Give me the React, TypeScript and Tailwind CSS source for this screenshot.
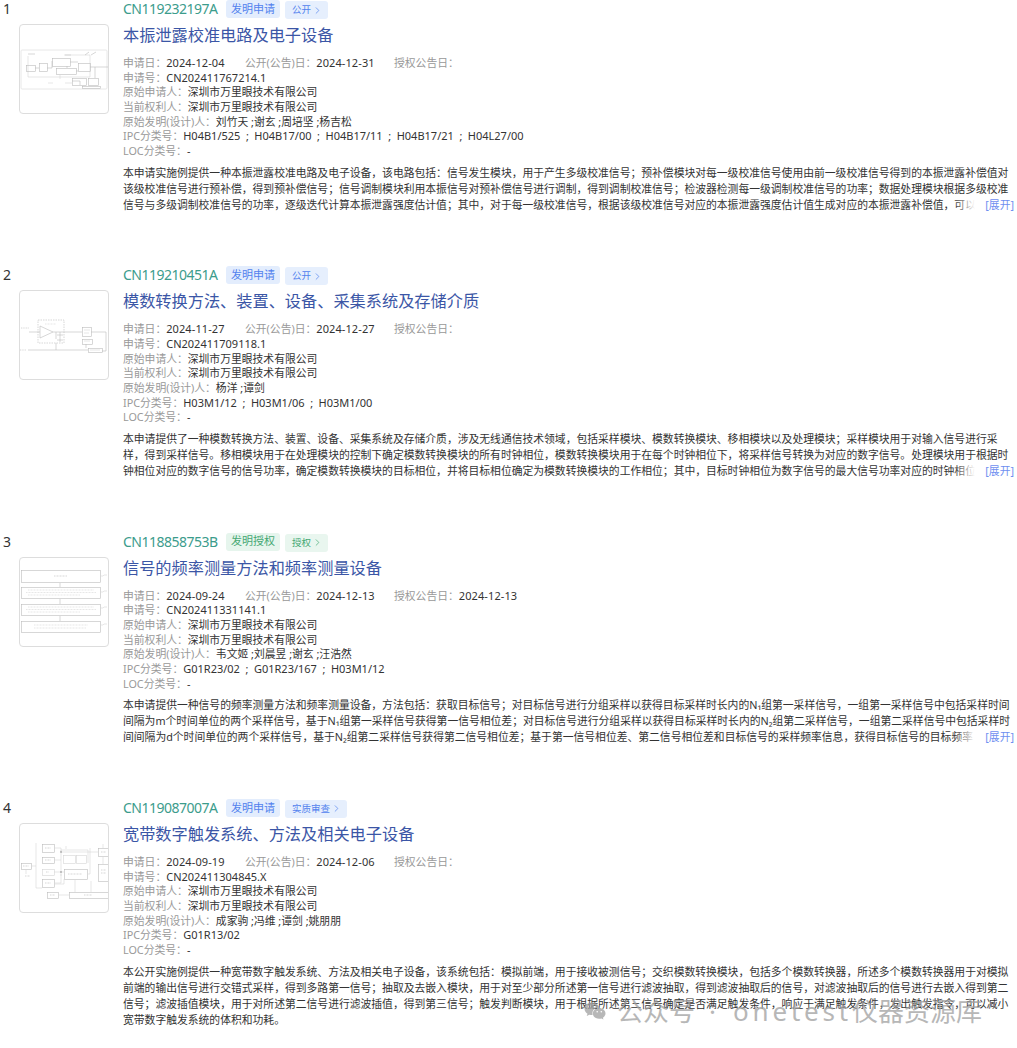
import React from "react";
import { FaWeixin } from "react-icons/fa";
import { ChevronRight } from "lucide-react";

type Row = {
  n: number;
  id: string;
  tag: string;
  status: string;
  green?: boolean;
  title: string;
  apply: string;
  pub: string;
  grant: string;
  appNo: string;
  inventors: string;
  ipc: string[];
  lines: string[];
  clipped: boolean;
  thumb: React.ReactNode;
};

const L = "#d6d6d6";
const D = "#bcbcbc";

const Box = ({ x, y, w, h, c = L }: { x: number; y: number; w: number; h: number; c?: string }) => (
  <rect x={x + 0.5} y={y + 0.5} width={w} height={h} fill="none" stroke={c} strokeWidth="0.6" />
);
const Ln = ({ d, c = L, dash }: { d: string; c?: string; dash?: string }) => (
  <path d={d} fill="none" stroke={c} strokeWidth="0.6" strokeDasharray={dash} />
);

const Thumb1 = () => (
  <svg width="88" height="88" viewBox="0 0 88 88">
    <rect x="1" y="25" width="86" height="39" rx="1" fill="none" stroke="#e2e2e2" strokeWidth="0.8" />
    <Ln d="M8 29h7M45 30h6" c={D} />
    <Ln d="M8 31V52H70V30H44" />
    <Box x={6} y={40} w={9} h={6} c={D} />
    <Box x={19} y={38} w={8} h={8} c={D} />
    <Box x={32} y={33} w={18} h={8} c={D} />
    <Box x={36} y={43} w={20} h={6} c={D} />
    <Box x={58} y={38} w={12} h={8} c={D} />
    <Box x={52} y={53} w={14} h={7} c={D} />
    <Box x={68} y={53} w={10} h={7} c={D} />
    <Box x={62} y={61} w={18} h={2} c={D} />
    <Ln d="M15 43h4M27 43h5V36M50 37h8M70 42h18M75 42V53M65 30l4-3M71 30l5-3M56 46h2M47 41v2M60 60V56h-8" c={D} />
    <Ln d="M40 49v5M45 58h7M28 58h5" c={L} />
  </svg>
);

const Thumb2 = () => (
  <svg width="88" height="88" viewBox="0 0 88 88">
    <Ln d="M18 29H44V52H18Z" c={D} dash="1.5 1" />
    <path d="M20 35L33 41L20 47Z" fill="none" stroke={D} strokeWidth="0.6" />
    <Ln d="M1 37h8" c={D} dash="1 0.7" />
    <Ln d="M9 41H20M33 41H62M71 41h15V60H82M36 41V48M40 41v10M37 44h6M37 49h6" c={D} />
    <Ln d="M8 59H68M36 52V59M66 53V57" c={D} />
    <Ln d="M0 59h6" c={D} dash="1 0.7" />
    <Box x={62} y={36} w={9} h={9} c={D} />
    <Box x={62} y={48} w={10} h={5} c={D} />
    <Box x={68} y={57} w={14} h={4} c={D} />
    <Ln d="M64 39h6M64 42h5M64 50h6M70 59h10" c={L} />
    <Ln d="M25 33h11" c={L} dash="1 0.5" />
  </svg>
);

const Thumb3 = () => (
  <svg width="88" height="88" viewBox="0 0 88 88">
    <Box x={1} y={12} w={79} h={12} c={D} />
    <Box x={1} y={29} w={79} h={11} c={D} />
    <Box x={1} y={46} w={79} h={11} c={D} />
    <Box x={1} y={63} w={79} h={11} c={D} />
    <Ln d="M34 18h13" c={D} dash="1 0.5" />
    <Ln d="M8 32H74M6 34.500H76M8 37H60M8 49H74M6 51.500H76M8 54H60M14 67H68M14 70H66" c={L} dash="1 0.5" />
    <Ln d="M40 25v4M40 41v5M40 58v5" c={D} />
    <Ln d="M80 18h3l1-1h3M80 34h3l1-1h3M80 50h3l1-1h3M80 67h3l1-1h3" c={L} />
  </svg>
);

const Thumb4 = () => (
  <svg width="88" height="88" viewBox="0 0 88 88">
    <Box x={1} y={39} w={10} h={6} c={D} />
    <Box x={22} y={20} w={12} h={8} c={D} />
    <Box x={22} y={33} w={12} h={6} c={D} />
    <Box x={22} y={45} w={12} h={6} />
    <Box x={22} y={55} w={12} h={8} c={D} />
    <Box x={44} y={45} w={23} h={10} c={D} />
    <Box x={43} y={31} w={12} h={8} c={L} />
    <Box x={56} y={31} w={10} h={8} c={L} />
    <Box x={78} y={24} w={10} h={8} c={D} />
    <Box x={78} y={40} w={10} h={17} c={D} />
    <Box x={49} y={68} w={39} h={6} c={D} />
    <Box x={27} y={68} w={11} h={6} c={D} />
    <Ln d="M16 19V64H22M16 42H11M34 24H41V52M34 36H41M34 48H44M34 59H41V50M41 28H78M67 50H70V24M55 55V68M71 57V68M83 32V40M38 71H49M34 60H44V55M6 45V50M41 28V26H68V39M46 25V22M83 24V20" c={L} />
    <Ln d="M25 24h6M25 36h6M26 48h3M25 59h6M48 50h14M81 28h5M81 46h5M81 49h5M64 71h8M30 71h5M3 42h6M5 52h5" c={D} dash="1 0.5" />
    <circle cx="41" cy="28" r="0.7" fill="#777" />
    <circle cx="41" cy="48" r="0.7" fill="#777" />
  </svg>
);

const rows: Row[] = [
  {
    n: 1,
    id: "CN119232197A",
    tag: "发明申请",
    status: "公开",
    title: "本振泄露校准电路及电子设备",
    apply: "2024-12-04",
    pub: "2024-12-31",
    grant: "",
    appNo: "CN202411767214.1",
    inventors: "刘竹天 ;谢玄 ;周培坚 ;杨吉松",
    ipc: ["H04B1/525", "H04B17/00", "H04B17/11", "H04B17/21", "H04L27/00"],
    clipped: true,
    lines: [
      "本申请实施例提供一种本振泄露校准电路及电子设备，该电路包括：信号发生模块，用于产生多级校准信号；预补偿模块对每一级校准信号使用由前一级校准信号得到的本振泄露补偿值对",
      "该级校准信号进行预补偿，得到预补偿信号；信号调制模块利用本振信号对预补偿信号进行调制，得到调制校准信号；检波器检测每一级调制校准信号的功率；数据处理模块根据多级校准",
      "信号与多级调制校准信号的功率，逐级迭代计算本振泄露强度估计值；其中，对于每一级校准信号，根据该级校准信号对应的本振泄露强度估计值生成对应的本振泄露补偿值，可以",
    ],
    thumb: <Thumb1 />,
  },
  {
    n: 2,
    id: "CN119210451A",
    tag: "发明申请",
    status: "公开",
    title: "模数转换方法、装置、设备、采集系统及存储介质",
    apply: "2024-11-27",
    pub: "2024-12-27",
    grant: "",
    appNo: "CN202411709118.1",
    inventors: "杨洋 ;谭剑",
    ipc: ["H03M1/12", "H03M1/06", "H03M1/00"],
    clipped: true,
    lines: [
      "本申请提供了一种模数转换方法、装置、设备、采集系统及存储介质，涉及无线通信技术领域，包括采样模块、模数转换模块、移相模块以及处理模块；采样模块用于对输入信号进行采",
      "样，得到采样信号。移相模块用于在处理模块的控制下确定模数转换模块的所有时钟相位，模数转换模块用于在每个时钟相位下，将采样信号转换为对应的数字信号。处理模块用于根据时",
      "钟相位对应的数字信号的信号功率，确定模数转换模块的目标相位，并将目标相位确定为模数转换模块的工作相位；其中，目标时钟相位为数字信号的最大信号功率对应的时钟相位",
    ],
    thumb: <Thumb2 />,
  },
  {
    n: 3,
    id: "CN118858753B",
    tag: "发明授权",
    status: "授权",
    green: true,
    title: "信号的频率测量方法和频率测量设备",
    apply: "2024-09-24",
    pub: "2024-12-13",
    grant: "2024-12-13",
    appNo: "CN202411331141.1",
    inventors: "韦文姬 ;刘晨昱 ;谢玄 ;汪浩然",
    ipc: ["G01R23/02", "G01R23/167", "H03M1/12"],
    clipped: true,
    lines: [
      "本申请提供一种信号的频率测量方法和频率测量设备，方法包括：获取目标信号；对目标信号进行分组采样以获得目标采样时长内的N₁组第一采样信号，一组第一采样信号中包括采样时间",
      "间隔为m个时间单位的两个采样信号，基于N₁组第一采样信号获得第一信号相位差；对目标信号进行分组采样以获得目标采样时长内的N₂组第二采样信号，一组第二采样信号中包括采样时",
      "间间隔为d个时间单位的两个采样信号，基于N₂组第二采样信号获得第二信号相位差；基于第一信号相位差、第二信号相位差和目标信号的采样频率信息，获得目标信号的目标频率",
    ],
    thumb: <Thumb3 />,
  },
  {
    n: 4,
    id: "CN119087007A",
    tag: "发明申请",
    status: "实质审查",
    title: "宽带数字触发系统、方法及相关电子设备",
    apply: "2024-09-19",
    pub: "2024-12-06",
    grant: "",
    appNo: "CN202411304845.X",
    inventors: "成家驹 ;冯维 ;谭剑 ;姚朋朋",
    ipc: ["G01R13/02"],
    clipped: false,
    lines: [
      "本公开实施例提供一种宽带数字触发系统、方法及相关电子设备，该系统包括：模拟前端，用于接收被测信号；交织模数转换模块，包括多个模数转换器，所述多个模数转换器用于对模拟",
      "前端的输出信号进行交错式采样，得到多路第一信号；抽取及去嵌入模块，用于对至少部分所述第一信号进行滤波抽取，得到滤波抽取后的信号，对滤波抽取后的信号进行去嵌入得到第二",
      "信号；滤波插值模块，用于对所述第二信号进行滤波插值，得到第三信号；触发判断模块，用于根据所述第三信号确定是否满足触发条件，响应于满足触发条件，发出触发指令，可以减小",
      "宽带数字触发系统的体积和功耗。",
    ],
    thumb: <Thumb4 />,
  },
];

const Meta = ({ label, children }: { label: string; children: React.ReactNode }) => (
  <div className="h-[14.67px] whitespace-nowrap leading-[14.67px]">
    <span className="text-[#999999]">{label}：</span>
    <span className="text-[#333333]">{children}</span>
  </div>
);

const Num = ({ children }: { children: React.ReactNode }) => (
  <span className="text-[11px] tracking-[0.1px]">{children}</span>
);

function PatentRow({ r }: { r: Row }) {
  return (
    <div className="flex h-[266.33px] overflow-hidden">
      <div className="w-[19px] shrink-0 pl-[3px] text-[14px] leading-[17px] text-[#333333]">{r.n}</div>
      <div className="mt-[24px] flex h-[90px] w-[90px] shrink-0 items-center justify-center rounded-[4px] border border-[#dddddd] bg-white">
        {r.thumb}
      </div>
      <div className="ml-[14px] w-[891px] shrink-0">
        <div className="flex h-[17px] items-start">
          <span className="w-[103px] text-[14px] leading-[17px] tracking-[-0.5px] text-[#3c9c8c]">{r.id}</span>
          <span
            className={`flex h-[18px] w-[54px] items-center justify-center rounded-[3px] text-[11px] ${
              r.green ? "bg-[#e6f5ed] text-[#45a873]" : "bg-[#e3edfd] text-[#5282ee]"
            }`}
          >
            {r.tag}
          </span>
          <span
            className={`ml-[5px] mt-[1px] flex h-[18px] items-center rounded-[3px] pl-[7px] pr-[5px] text-[9.500px] ${
              r.green ? "bg-[#e9f6ef] text-[#45a873]" : "bg-[#e6effd] text-[#5282ee]"
            }`}
          >
            {r.status}
            <ChevronRight className="ml-[1px] h-[11px] w-[11px]" strokeWidth={1.5} />
          </span>
        </div>
        <div className="mt-[6px] h-[24px] whitespace-nowrap text-[16.200px] leading-[24px] text-[#3b56a6]">{r.title}</div>
        <div className="mt-[9px] text-[10.800px]">
          <div className="flex h-[14.67px] whitespace-nowrap leading-[14.67px]">
            <span className="w-[122px]">
              <span className="text-[#999999]">申请日：</span>
              <span className="text-[#333333]"><Num>{r.apply}</Num></span>
            </span>
            <span className="w-[149px]">
              <span className="text-[#999999]">公开(公告)日：</span>
              <span className="text-[#333333]"><Num>{r.pub}</Num></span>
            </span>
            <span>
              <span className="text-[#999999]">授权公告日：</span>
              <span className="text-[#333333]"><Num>{r.grant}</Num></span>
            </span>
          </div>
          <Meta label="申请号"><span className="text-[11px]">{r.appNo}</span></Meta>
          <Meta label="原始申请人">深圳市万里眼技术有限公司</Meta>
          <Meta label="当前权利人">深圳市万里眼技术有限公司</Meta>
          <Meta label="原始发明(设计)人">{r.inventors}</Meta>
          <Meta label="IPC分类号">
            {r.ipc.map((code, i) => (
              <React.Fragment key={code}>
                {i > 0 && <span className="inline-block w-[14px] text-center">;</span>}
                <span className="text-[11px]">{code}</span>
              </React.Fragment>
            ))}
          </Meta>
          <Meta label="LOC分类号">-</Meta>
        </div>
        <div className="relative mt-[6px] text-[10.800px] leading-[16px] text-[#333333]">
          {r.lines.map((line, i) => (
            <div key={i} className="h-[16px] whitespace-nowrap">
              {line}
            </div>
          ))}
          {r.clipped && (
            <div className="absolute bottom-0 right-0 flex h-[16px] items-center">
              <span className="h-[16px] w-[20px] bg-gradient-to-r from-transparent to-white" />
              <span className="flex h-[16px] w-[39px] items-center justify-end bg-white text-[#6f8ff0]">[展开]</span>
            </div>
          )}
        </div>
      </div>
    </div>
  );
}

export default function App() {
  return (
    <div
      className="relative h-[1048px] w-[1017px] overflow-hidden bg-white"
      style={{ fontFamily: '"Noto Sans", "Noto Sans CJK SC", sans-serif' }}
    >
      {rows.map((r) => (
        <PatentRow key={r.n} r={r} />
      ))}
      <div className="pointer-events-none absolute left-[584px] top-[995px] flex h-[32px] items-center whitespace-nowrap text-[26px] leading-[32px] text-[#a0a0a0] opacity-75">
        <FaWeixin className="mr-[11px] h-[22px] w-[22px]" />
        <span>公众号</span>
        <span className="ml-[14px] w-[24px]">·</span>
        <span className="tracking-[3.800px]">onetest</span>
        <span>仪器资源库</span>
      </div>
    </div>
  );
}
